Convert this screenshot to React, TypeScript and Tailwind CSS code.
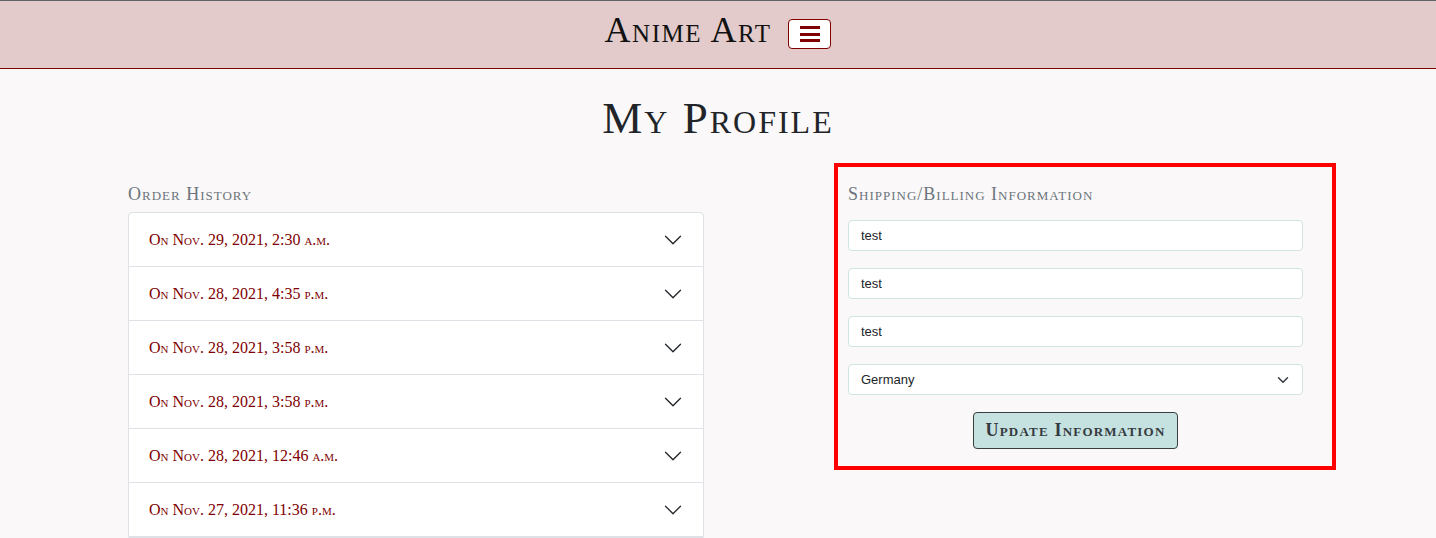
const orders = [
  'On Nov. 29, 2021, 2:30 a.m.',
  'On Nov. 28, 2021, 4:35 p.m.',
  'On Nov. 28, 2021, 3:58 p.m.',
  'On Nov. 28, 2021, 3:58 p.m.',
  'On Nov. 28, 2021, 12:46 a.m.',
  'On Nov. 27, 2021, 11:36 p.m.',
];

const serif = "font-['Liberation_Serif','Times_New_Roman',serif] [font-variant:small-caps]";

const Chevron = () => (
  <svg width="20" height="20" viewBox="0 0 16 16" fill="#212529">
    <path
      fillRule="evenodd"
      d="M1.646 4.646a.5.5 0 0 1 .708 0L8 10.293l5.646-5.647a.5.5 0 0 1 .708.708l-6 6a.5.5 0 0 1-.708 0l-6-6a.5.5 0 0 1 0-.708z"
    />
  </svg>
);

const App = () => {
  return (
    <div className="h-[538px] overflow-hidden bg-[#faf8f8]">
      {/* Navbar */}
      <header className="h-[69px] border-t border-t-[#5f6368] border-b border-b-[#800000] bg-[#e2cbca] flex items-start justify-center gap-[17px]">
        <span className={`${serif} mt-[11px] text-[36px] leading-none tracking-[1.5px] text-[#111]`}>
          Anime Art
        </span>
        <button className="mt-[18px] w-[43px] h-[30px] bg-white border border-[#800000] rounded-[4px] flex flex-col items-center justify-center gap-[3.5px]">
          <span className="block w-[20px] h-[3px] bg-[#800000]" />
          <span className="block w-[20px] h-[3px] bg-[#800000]" />
          <span className="block w-[20px] h-[3px] bg-[#800000]" />
        </button>
      </header>

      <h1 className={`${serif} mt-[22px] text-center text-[45px] leading-[54px] tracking-[2px] text-[#212529]`}>
        My Profile
      </h1>

      <div className="mt-[18px] flex items-start">
        {/* Order history */}
        <section className="ml-[128px] w-[576px] pt-[20px]">
          <h2 className={`${serif} text-[18px] leading-[22px] tracking-[1px] text-[#6c757d] mb-[7px]`}>
            Order History
          </h2>
          <div className="border border-[#dee2e6] rounded-t-[4px] bg-white">
            {orders.map((o, i) => (
              <div
                key={i}
                className="h-[54px] border-b border-[#dee2e6] px-5 flex items-center justify-between"
              >
                <span className={`${serif} text-[16px] text-[#800000]`}>{o}</span>
                <Chevron />
              </div>
            ))}
          </div>
        </section>

        {/* Shipping / billing */}
        <section className="ml-[130px] w-[502px] border-4 border-[#ff0000] pl-[10px] pr-[29px] pt-[16px] pb-[17px] flex flex-col">
          <h2 className={`${serif} text-[18px] leading-[22px] tracking-[1px] text-[#6c757d] mb-[15px]`}>
            Shipping/Billing Information
          </h2>
          <div className="flex flex-col gap-[17px] font-['Liberation_Sans',Arial,sans-serif] text-[13px] text-[#212529]">
            <input
              defaultValue="test"
              className="h-[31px] bg-white border border-[#cfe4e3] rounded-[4px] px-3 outline-none"
            />
            <input
              defaultValue="test"
              className="h-[31px] bg-white border border-[#cfe4e3] rounded-[4px] px-3 outline-none"
            />
            <input
              defaultValue="test"
              className="h-[31px] bg-white border border-[#cfe4e3] rounded-[4px] px-3 outline-none"
            />
            <div className="relative">
              <select
                defaultValue="Germany"
                className="w-full h-[31px] appearance-none bg-white border border-[#cfe4e3] rounded-[4px] pl-3 pr-9 outline-none"
              >
                <option>Germany</option>
                <option>France</option>
                <option>Japan</option>
              </select>
              <svg
                className="absolute right-[12px] top-[10px] pointer-events-none"
                width="16"
                height="12"
                viewBox="0 0 16 16"
                fill="none"
                stroke="#343a40"
                strokeWidth="2"
                strokeLinecap="round"
                strokeLinejoin="round"
              >
                <path d="m2 5 6 6 6-6" />
              </svg>
            </div>
          </div>
          <button
            className={`${serif} mt-[17px] self-center w-[205px] h-[37px] bg-[#c6e2e0] border border-[#3a3d3d] rounded-[4px] text-[18px] font-bold tracking-[1.2px] text-[#343a40]`}
          >
            Update Information
          </button>
        </section>
      </div>
    </div>
  );
};

export default App;
